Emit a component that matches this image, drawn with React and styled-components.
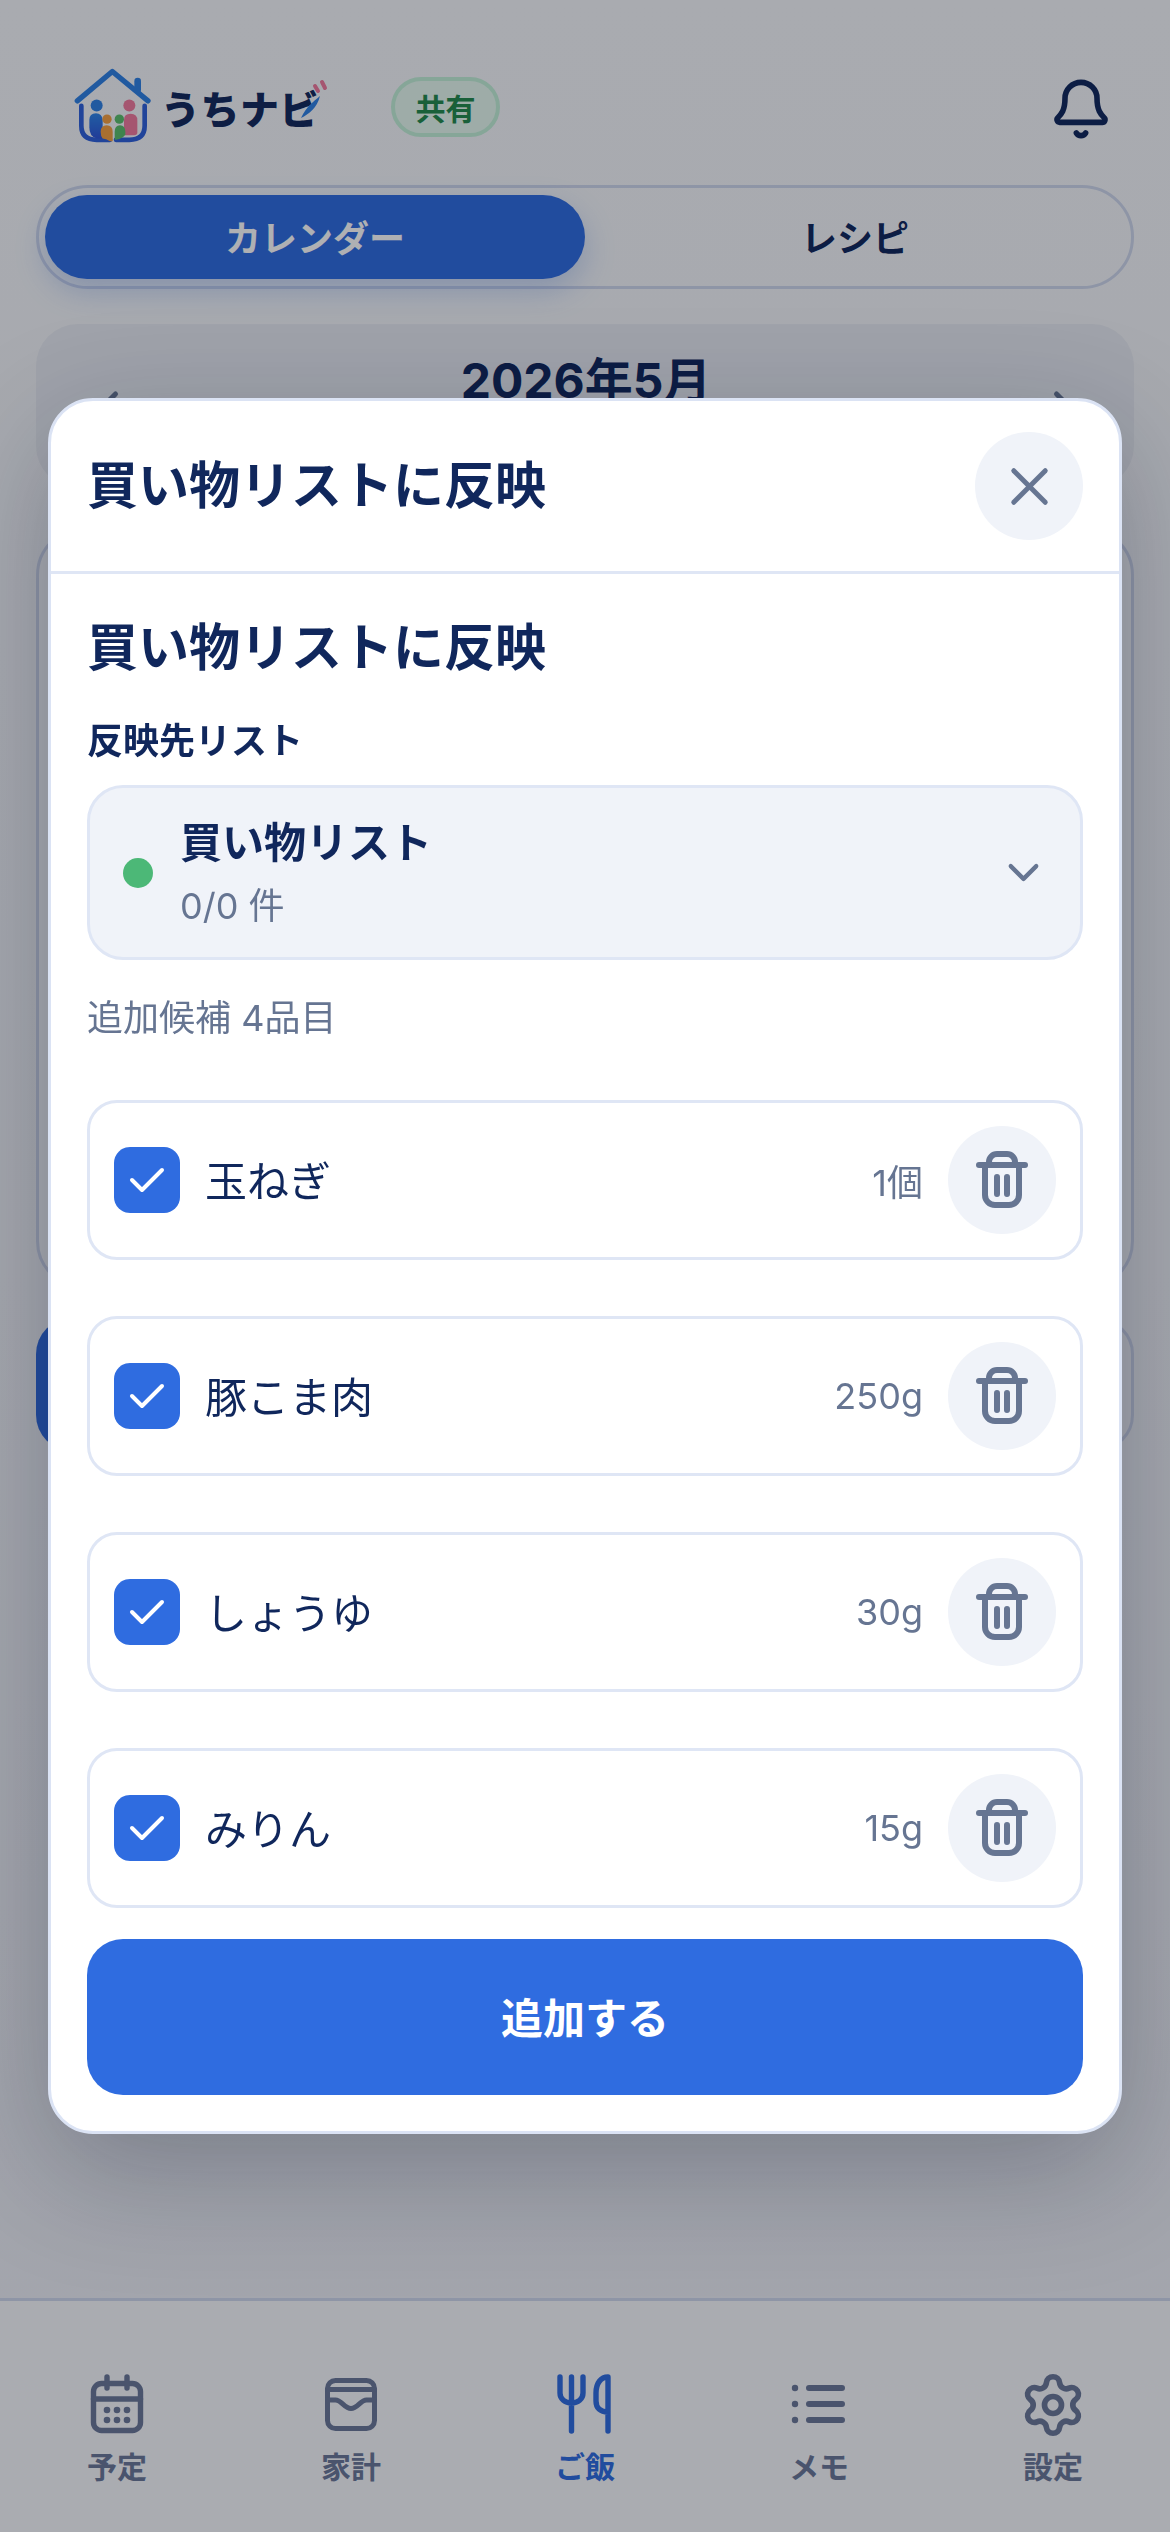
import React from "react";
import styled, { createGlobalStyle } from "styled-components";
import { Settings, X, ChevronDown, ChevronLeft, ChevronRight, Bell } from "lucide-react";

const NAVY = "#10275c";
const SLATE = "#667592";
const LINE = "#dfe6f5";
const EDGE = "#cfd7ec";
const BLUE = "#2f6ce0";

const Global = createGlobalStyle`
  html, body { margin: 0; padding: 0; }
  body { font-family: Inter, "Noto Sans CJK JP", sans-serif; color: ${NAVY}; }
  * { box-sizing: border-box; }
`;

const Page = styled.div`
  width: 1170px;
  height: 2532px;
  display: flex;
  flex-direction: column;
  background: linear-gradient(180deg, #f6f8fb 0%, #f2f4f9 50%, #eceef5 100%);
`;
const Main = styled.main`
  flex: 1;
  padding: 68px 36px 0;
  display: flex;
  flex-direction: column;
`;
const Header = styled.header`
  height: 77px;
  padding: 0 21px 0 38px;
  display: flex;
  align-items: center;
`;
const Brand = styled.div`
  display: flex;
  align-items: center;
  gap: 7px;
`;
const BrandName = styled.span`
  position: relative;
  font-size: 39px;
  font-weight: 900;
  letter-spacing: 0.5px;
  color: #12295c;
  line-height: 1;
  margin-top: 6px;
`;
const Chip = styled.span`
  width: 109px;
  height: 60px;
  margin-left: 72px;
  border-radius: 30px;
  border: 4px solid #c3f0d8;
  background: #e6faef;
  color: #22894c;
  font-size: 30px;
  font-weight: 700;
  display: flex;
  align-items: center;
  justify-content: center;
`;
const BellButton = styled.div`
  margin-left: auto;
  margin-top: 4px;
  display: flex;
  color: ${NAVY};
`;
const Segment = styled.div`
  margin-top: 40px;
  height: 104px;
  padding: 7px 6px;
  border: 3px solid ${EDGE};
  border-radius: 52px;
  display: grid;
  grid-template-columns: 1fr 1fr;
`;
const SegmentTab = styled.div`
  border-radius: 45px;
  padding-bottom: 3px;
  display: flex;
  align-items: center;
  justify-content: center;
  font-size: 36px;
  font-weight: 700;
  background: ${(p) => (p.$active ? BLUE : "transparent")};
  color: ${(p) => (p.$active ? "#fff" : NAVY)};
  box-shadow: ${(p) => (p.$active ? "0 12px 30px rgba(47,108,224,.25)" : "none")};
`;
const MonthCard = styled.section`
  margin-top: 35px;
  height: 164px;
  border-radius: 42px;
  background: #e9ecf3;
  padding: 33px 40px 0 42px;
  display: flex;
  justify-content: space-between;
  align-items: flex-start;
`;
const MonthTitle = styled.div`
  font-size: 48px;
  font-weight: 700;
  line-height: 48px;
  color: ${NAVY};
`;
const MonthArrow = styled.div`
  display: flex;
  color: ${SLATE};
  margin-top: 22px;
`;
const CalendarCard = styled.section`
  margin-top: 39px;
  height: 762px;
  border: 3px solid ${EDGE};
  border-radius: 48px;
  background: #f7f8fc;
`;
const ActionRow = styled.div`
  margin-top: 29px;
  height: 133px;
  display: grid;
  grid-template-columns: 1fr 1fr;
  gap: 24px;
`;
const ActionButton = styled.div`
  border-radius: 36px;
  background: ${(p) => (p.$primary ? BLUE : "transparent")};
  border: ${(p) => (p.$primary ? "0" : `3px solid ${EDGE}`)};
`;

const Nav = styled.nav`
  height: 234px;
  border-top: 3px solid ${EDGE};
  background: #f8f9fc;
  padding-top: 68px;
  display: grid;
  grid-template-columns: repeat(5, 1fr);
`;
const NavItem = styled.div`
  display: flex;
  flex-direction: column;
  align-items: center;
  gap: 8px;
  color: ${(p) => (p.$active ? BLUE : "#6a7899")};
`;
const NavLabel = styled.span`
  font-size: 30px;
  font-weight: 700;
  line-height: 36px;
`;
const GearIcon = styled(Settings)`
  margin: 2px;
`;

const Overlay = styled.div`
  position: fixed;
  inset: 0;
  padding: 0 48px;
  display: flex;
  align-items: center;
  background: rgba(5, 10, 20, 0.32);
`;
const Modal = styled.div`
  width: 1074px;
  height: 1736px;
  background: #fff;
  border: 3px solid #dbe3f4;
  border-radius: 45px;
  box-shadow: 0 36px 120px rgba(15, 23, 42, 0.28);
  display: flex;
  flex-direction: column;
`;
const ModalHeader = styled.div`
  height: 173px;
  padding: 0 36px;
  border-bottom: 3px solid ${LINE};
  display: flex;
  align-items: center;
  justify-content: space-between;
`;
const ModalTitle = styled.h2`
  margin: 0;
  font-size: 51px;
  font-weight: 700;
  line-height: 60px;
  color: ${NAVY};
`;
const CircleButton = styled.div`
  width: 108px;
  height: 108px;
  flex: none;
  border-radius: 50%;
  background: #f0f3f9;
  color: ${SLATE};
  display: flex;
  align-items: center;
  justify-content: center;
`;
const ModalBody = styled.div`
  flex: 1;
  padding: 48px 36px 36px;
  display: flex;
  flex-direction: column;
`;
const SectionTitle = styled.h3`
  margin: 0;
  font-size: 51px;
  font-weight: 700;
  line-height: 52px;
  color: ${NAVY};
`;
const FieldLabel = styled.div`
  margin-top: 47px;
  font-size: 36px;
  font-weight: 700;
  line-height: 40px;
  color: ${NAVY};
`;
const Select = styled.div`
  margin-top: 24px;
  height: 175px;
  padding: 0 31px 0 33px;
  background: #f0f3f9;
  border: 3px solid ${LINE};
  border-radius: 36px;
  display: flex;
  align-items: center;
  color: ${SLATE};
`;
const Dot = styled.span`
  width: 30px;
  height: 30px;
  border-radius: 50%;
  background: #4cb877;
  flex: none;
`;
const SelectText = styled.div`
  margin-left: 27px;
  flex: 1;
  display: flex;
  flex-direction: column;
  gap: 16px;
`;
const SelectName = styled.div`
  font-size: 42px;
  font-weight: 700;
  line-height: 50px;
  color: ${NAVY};
`;
const SelectMeta = styled.div`
  font-size: 36px;
  line-height: 44px;
  color: ${SLATE};
`;
const Hint = styled.div`
  margin-top: 36px;
  font-size: 36px;
  line-height: 44px;
  color: ${SLATE};
`;
const List = styled.div`
  margin-top: 60px;
  display: flex;
  flex-direction: column;
  gap: 56px;
`;
const Row = styled.div`
  height: 160px;
  padding: 0 24px;
  border: 3px solid ${LINE};
  border-radius: 30px;
  display: flex;
  align-items: center;
`;
const Check = styled.span`
  width: 66px;
  height: 66px;
  border-radius: 16px;
  background: ${BLUE};
  display: flex;
  flex: none;
`;
const ItemName = styled.span`
  margin-left: 25px;
  margin-bottom: 4px;
  flex: 1;
  font-size: 42px;
  color: ${NAVY};
`;
const ItemAmount = styled.span`
  margin-right: 25px;
  font-size: 36px;
  color: ${SLATE};
`;
const Submit = styled.div`
  margin-top: 31px;
  height: 156px;
  padding-bottom: 4px;
  border-radius: 36px;
  background: ${BLUE};
  color: #fff;
  font-size: 42px;
  font-weight: 700;
  display: flex;
  align-items: center;
  justify-content: center;
`;

const Logo = () => (
  <svg width="80" height="77" viewBox="100 85 240 230" fill="none">
    <defs>
      <linearGradient id="lg" x1="0" y1="0" x2="0" y2="1">
        <stop offset="0" stopColor="#2f86e8" />
        <stop offset="1" stopColor="#2f55d8" />
      </linearGradient>
    </defs>
    <g stroke="#2f80e4" strokeLinecap="round" strokeLinejoin="round">
      <path d="M110 183 L215 95 L322 183" strokeWidth="16" />
      <path d="M291 124 V150" strokeWidth="20" />
    </g>
    <g stroke="#2f60da" strokeWidth="14" strokeLinecap="round">
      <path d="M122 198 V258 Q122 300 168 300 H208" />
      <path d="M312 198 V258 Q312 300 266 300 H226" />
    </g>
    <circle cx="168" cy="197" r="18" fill="#2f80e4" />
    <path d="M146 240 Q146 220 166 220 Q184 220 186 240 V296 H168 Q146 290 146 262 Z" fill="url(#lg)" />
    <circle cx="266" cy="197" r="18" fill="#f07a9c" />
    <path d="M250 240 Q250 222 270 222 Q290 222 290 242 V278 Q290 286 280 286 H250 Z" fill="#f07a9c" />
    <circle cx="199" cy="238" r="14" fill="#f5a040" />
    <path d="M180 276 Q180 256 198 256 Q216 256 216 276 V304 H208 Q196 296 186 296 Q180 290 180 276 Z" fill="#f5a040" />
    <circle cx="236" cy="238" r="14" fill="#5bbf6a" />
    <path d="M222 276 Q222 256 238 256 Q254 256 254 276 V284 Q248 296 226 300 H222 Z" fill="#5bbf6a" />
  </svg>
);

const BrandMark = styled.svg`
  position: absolute;
  right: -10px;
  top: -12px;
`;

const CalendarIcon = () => (
  <svg width="72" height="72" viewBox="0 0 72 72" fill="none" stroke="currentColor" strokeWidth="5.4" strokeLinecap="round">
    <rect x="12.500" y="14.500" width="47" height="47" rx="8" />
    <path d="M26 8v11M46 8v11M12.500 30h47" />
    <g fill="currentColor" stroke="none">
      {[26, 36, 46].map((x) => [41, 51].map((y) => <circle key={x + "-" + y} cx={x} cy={y} r="3.300" />))}
    </g>
  </svg>
);
const WalletIcon = () => (
  <svg width="72" height="72" viewBox="0 0 72 72" fill="none" stroke="currentColor" strokeWidth="5" strokeLinecap="round" strokeLinejoin="round">
    <rect x="12.500" y="11.500" width="47" height="48" rx="8" />
    <path d="M12.500 20.500h47" />
    <path d="M12.500 31h8c6 0 9 8.500 15.500 8.500s9.500-8.500 15.500-8.500h8" />
  </svg>
);
const UtensilsIcon = () => (
  <svg width="72" height="72" viewBox="0 0 72 72" fill="none" stroke="currentColor" strokeWidth="5.4" strokeLinecap="round" strokeLinejoin="round">
    <path d="M11 8v16c0 6 5 10 11.500 10S34 30 34 24V8M22.500 8v54" />
    <path d="M59 62V8c-7 0-12 6-12 16v8c0 7 4 11 12 11" />
  </svg>
);
const ListIcon = () => (
  <svg width="72" height="72" viewBox="0 0 72 72" fill="none" stroke="currentColor" strokeWidth="6" strokeLinecap="round">
    <path d="M26 19h33M26 35h33M26 51h33" />
    <g fill="currentColor" stroke="none">
      <circle cx="12" cy="19" r="3.200" />
      <circle cx="12" cy="35" r="3.200" />
      <circle cx="12" cy="51" r="3.200" />
    </g>
  </svg>
);
const TrashIcon = () => (
  <svg width="72" height="72" viewBox="0 0 72 72" fill="none" stroke={SLATE} strokeWidth="6" strokeLinecap="round" strokeLinejoin="round">
    <path d="M13 21h46" />
    <path d="M23 20v-2a8 8 0 0 1 8-8h10a8 8 0 0 1 8 8v2" />
    <path d="M19 21v30a10 10 0 0 0 10 10h14a10 10 0 0 0 10-10V21" />
    <path d="M31 33v17M41 33v17" />
  </svg>
);
const CheckMark = () => (
  <svg width="66" height="66" viewBox="0 0 66 66" fill="none" stroke="#fff" strokeWidth="4" strokeLinecap="round" strokeLinejoin="round">
    <path d="M18 33l10 10 20-20" />
  </svg>
);

const items = [
  { name: "玉ねぎ", amount: "1個" },
  { name: "豚こま肉", amount: "250g" },
  { name: "しょうゆ", amount: "30g" },
  { name: "みりん", amount: "15g" },
];

export default function App() {
  return (
    <>
      <Global />
      <Page>
        <Main>
          <Header>
            <Brand>
              <Logo />
              <BrandName>
                うちナビ
                <BrandMark width="40" height="44" viewBox="0 0 40 44" fill="none">
                  <path d="M12 40C20 36 28 30 31 18 24 24 18 28 12 40Z" fill="#2f80e4" />
                  <path d="M26 8l3 5M33 4l3 6" stroke="#f07a9c" strokeWidth="4" strokeLinecap="round" />
                </BrandMark>
              </BrandName>
            </Brand>
            <Chip>共有</Chip>
            <BellButton>
              <Bell size={64} strokeWidth={2.1} />
            </BellButton>
          </Header>
          <Segment>
            <SegmentTab $active>カレンダー</SegmentTab>
            <SegmentTab>レシピ</SegmentTab>
          </Segment>
          <MonthCard>
            <MonthArrow>
              <ChevronLeft size={60} strokeWidth={2} />
            </MonthArrow>
            <MonthTitle>2026年5月</MonthTitle>
            <MonthArrow>
              <ChevronRight size={60} strokeWidth={2} />
            </MonthArrow>
          </MonthCard>
          <CalendarCard />
          <ActionRow>
            <ActionButton $primary />
            <ActionButton />
          </ActionRow>
        </Main>
        <Nav>
          <NavItem>
            <CalendarIcon />
            <NavLabel>予定</NavLabel>
          </NavItem>
          <NavItem>
            <WalletIcon />
            <NavLabel>家計</NavLabel>
          </NavItem>
          <NavItem $active>
            <UtensilsIcon />
            <NavLabel>ご飯</NavLabel>
          </NavItem>
          <NavItem>
            <ListIcon />
            <NavLabel>メモ</NavLabel>
          </NavItem>
          <NavItem>
            <GearIcon size={68} strokeWidth={2} />
            <NavLabel>設定</NavLabel>
          </NavItem>
        </Nav>
      </Page>
      <Overlay>
        <Modal>
          <ModalHeader>
            <ModalTitle>買い物リストに反映</ModalTitle>
            <CircleButton>
              <X size={63} strokeWidth={1.9} />
            </CircleButton>
          </ModalHeader>
          <ModalBody>
            <SectionTitle>買い物リストに反映</SectionTitle>
            <FieldLabel>反映先リスト</FieldLabel>
            <Select>
              <Dot />
              <SelectText>
                <SelectName>買い物リスト</SelectName>
                <SelectMeta>0/0 件</SelectMeta>
              </SelectText>
              <ChevronDown size={51} strokeWidth={2} />
            </Select>
            <Hint>追加候補 4品目</Hint>
            <List>
              {items.map((item) => (
                <Row key={item.name}>
                  <Check>
                    <CheckMark />
                  </Check>
                  <ItemName>{item.name}</ItemName>
                  <ItemAmount>{item.amount}</ItemAmount>
                  <CircleButton>
                    <TrashIcon />
                  </CircleButton>
                </Row>
              ))}
            </List>
            <Submit>追加する</Submit>
          </ModalBody>
        </Modal>
      </Overlay>
    </>
  );
}
